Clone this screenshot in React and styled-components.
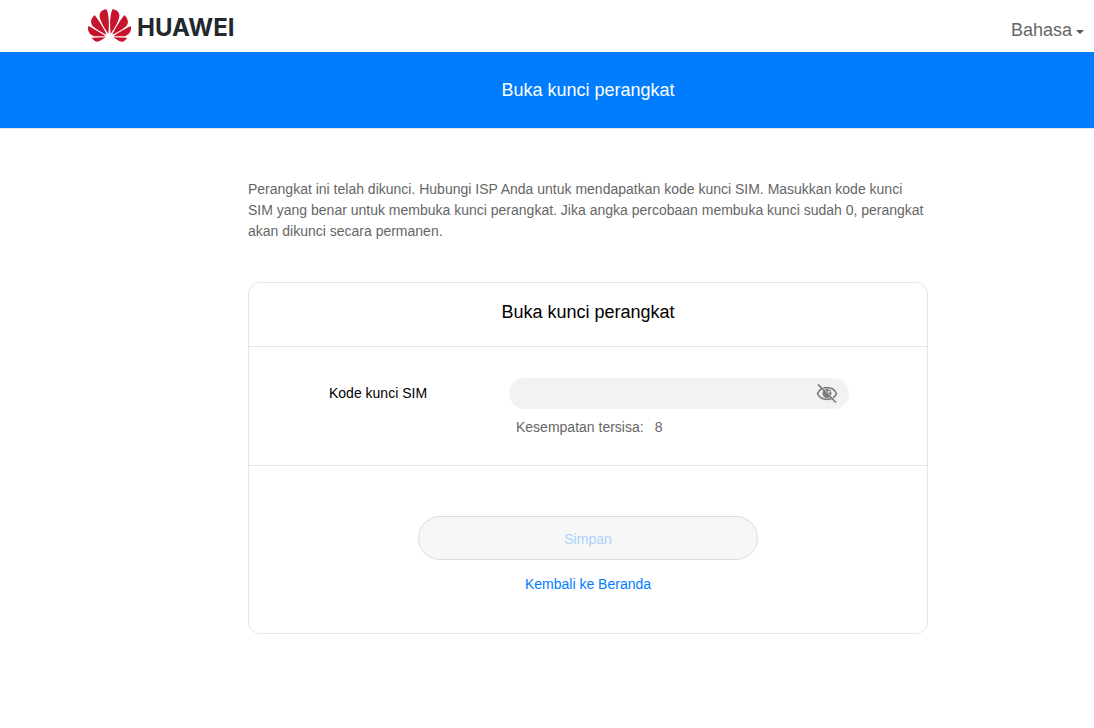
import { useState } from "react";
import styled, { createGlobalStyle } from "styled-components";
import { SiHuawei } from "react-icons/si";

const EyeOff = () => (
  <svg width="22" height="20" viewBox="0 0 22 20" fill="none" aria-hidden="true">
    <path
      d="M1.500 9.500C3.200 5.700 6.700 3.600 11 3.600s7.800 2.100 9.500 5.900c-1.700 3.800-5.200 5.900-9.500 5.900S3.200 13.300 1.500 9.500z"
      stroke="#7c7c7c"
      strokeWidth="1.700"
    />
    <circle cx="11" cy="9.500" r="4.500" fill="#7c7c7c" />
    <circle cx="13" cy="7.800" r="1" fill="#f2f2f2" />
    <path d="M3.500 0.500l17 17" stroke="#f2f2f2" strokeWidth="0.800" />
    <path d="M2 0.500l18 18" stroke="#7c7c7c" strokeWidth="1.700" />
  </svg>
);

const App = () => {
  const [code, setCode] = useState("");
  const [visible, setVisible] = useState(false);

  return (
    <>
      <GlobalStyle />
      <Header>
        <Logo href="#home">
          <SiHuawei size={43} color="#c7142d" aria-hidden="true" />
          <Brand>HUAWEI</Brand>
        </Logo>
        <Language>
          <LanguageSelect aria-label="Bahasa" defaultValue="id">
            <option value="id">Bahasa</option>
            <option value="en">English</option>
          </LanguageSelect>
          <Caret />
        </Language>
      </Header>

      <Banner>
        <Title>Buka kunci perangkat</Title>
      </Banner>

      <Main>
        <Description>
          Perangkat ini telah dikunci. Hubungi ISP Anda untuk mendapatkan kode
          kunci SIM. Masukkan kode kunci SIM yang benar untuk membuka kunci
          perangkat. Jika angka percobaan membuka kunci sudah 0, perangkat akan
          dikunci secara permanen.
        </Description>

        <Card onSubmit={(e) => e.preventDefault()}>
          <CardHeader>
            <Title as="h2">Buka kunci perangkat</Title>
          </CardHeader>

          <Fields>
            <Label htmlFor="sim-code">Kode kunci SIM</Label>
            <InputBox>
              <Input
                id="sim-code"
                type={visible ? "text" : "password"}
                autoComplete="off"
                value={code}
                onChange={(e) => setCode(e.target.value)}
              />
              <EyeButton
                type="button"
                aria-label="Tampilkan kode"
                onClick={() => setVisible(!visible)}
              >
                <EyeOff />
              </EyeButton>
            </InputBox>
            <Hint>
              <span>Kesempatan tersisa:</span>
              <span>8</span>
            </Hint>
          </Fields>

          <Actions>
            <SaveButton type="submit" disabled={!code}>
              Simpan
            </SaveButton>
            <HomeLink href="#home">Kembali ke Beranda</HomeLink>
          </Actions>
        </Card>
      </Main>
    </>
  );
};

export default App;

const GlobalStyle = createGlobalStyle`
  * {
    box-sizing: border-box;
  }

  body {
    margin: 0;
    background-color: white;
    color: black;
    font-family: "Liberation Sans", Arial, sans-serif;
    font-size: 14px;
    line-height: 21px;
  }

  input, select, button {
    font-family: inherit;
  }
`;

const Header = styled.header`
  display: flex;
  align-items: center;
  justify-content: space-between;
  height: 52px;
  padding: 0 10px 0 88px;
`;

const Logo = styled.a`
  display: flex;
  align-items: center;
  gap: 6px;
  padding-bottom: 2px;
  text-decoration: none;
`;

const Brand = styled.span`
  color: #22282c;
  font-family: Inter, sans-serif;
  font-size: 24px;
  font-weight: 700;
  line-height: 24px;
  padding-top: 6px;
`;

const Language = styled.div`
  display: flex;
  align-items: center;
  gap: 3px;
  padding-top: 8px;
`;

const LanguageSelect = styled.select`
  appearance: none;
  border: none;
  padding: 0;
  background: none;
  color: #666;
  font-size: 18px;
  line-height: 24px;
  cursor: pointer;
`;

const Caret = styled.span`
  border: 4px solid transparent;
  border-top-color: #555;
  border-bottom: none;
  margin-top: 4px;
  pointer-events: none;
`;

const Banner = styled.div`
  display: flex;
  align-items: center;
  justify-content: center;
  height: 77px;
  padding: 0 6px 0 88px;
  border-bottom: 1px solid #e6e6e6;
  background-color: #007dff;
  color: white;
`;

const Title = styled.h1`
  margin: 0;
  font-size: 18px;
  font-weight: 400;
  line-height: 24px;
`;

const Main = styled.main`
  display: flex;
  flex-direction: column;
  align-items: center;
  gap: 40px;
  padding: 50px 6px 40px 88px;
`;

const Description = styled.p`
  width: 100%;
  max-width: 680px;
  margin: 0;
  color: #666;
`;

const Card = styled.form`
  width: 100%;
  max-width: 680px;
  border: 1px solid #e6e6e6;
  border-radius: 12px;
`;

const CardHeader = styled.div`
  display: flex;
  justify-content: center;
  padding: 17px 0 22px;
  border-bottom: 1px solid #e6e6e6;
`;

const Fields = styled.div`
  display: grid;
  grid-template-columns: 180px 1fr;
  align-items: center;
  row-gap: 8px;
  padding: 31px 78px 27px 80px;
  border-bottom: 1px solid #e6e6e6;
`;

const Label = styled.label`
  color: black;
`;

const InputBox = styled.div`
  display: flex;
  align-items: center;
  height: 31px;
  padding: 0 11px 0 16px;
  border-radius: 16px;
  background-color: #f2f2f2;
`;

const Input = styled.input`
  flex: 1;
  min-width: 0;
  border: none;
  outline: none;
  padding: 0;
  background: none;
  font-size: 14px;
`;

const EyeButton = styled.button`
  display: flex;
  border: none;
  padding: 0;
  background: none;
  cursor: pointer;
`;

const Hint = styled.p`
  display: flex;
  gap: 11px;
  grid-column: 2;
  margin: 0;
  padding-left: 7px;
  color: #666;
`;

const Actions = styled.div`
  display: flex;
  flex-direction: column;
  align-items: center;
  gap: 14px;
  padding: 50px 20px 38px;
`;

const SaveButton = styled.button`
  width: 100%;
  max-width: 340px;
  height: 44px;
  border: 1px solid #dcdcdc;
  border-radius: 22px;
  padding: 2px 0 0;
  background-color: #f7f7f7;
  color: #007dff;
  font-size: 14px;

  &:disabled {
    color: #abd3ff;
  }
`;

const HomeLink = styled.a`
  color: #007dff;
  text-decoration: none;
`;
